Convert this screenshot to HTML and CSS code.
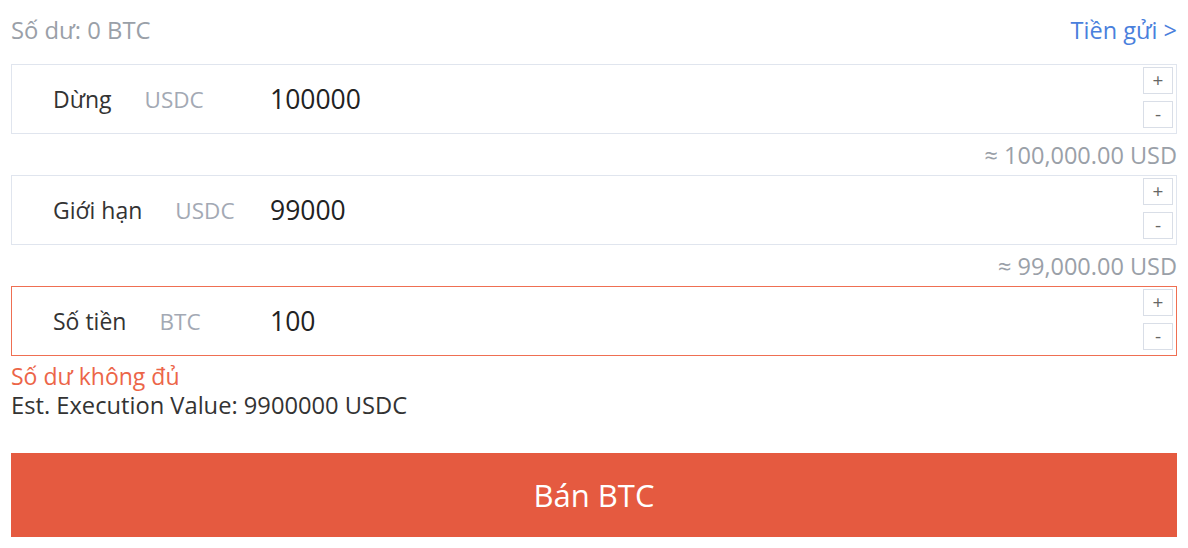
FILE: index.html
```html
<!DOCTYPE html>
<html lang="vi">
<head>
<meta charset="utf-8">
<title>Bán BTC</title>
<link rel="stylesheet" href="styles.css">
</head>
<body>
<div class="panel">
  <div class="top-row">
    <span class="balance">Số dư: 0 BTC</span>
    <a class="deposit" href="#">Tiền gửi &gt;</a>
  </div>

  <div class="field">
    <div class="field-main">
      <span class="label">Dừng</span>
      <span class="unit">USDC</span>
    </div>
    <span class="value">100000</span>
    <div class="steppers">
      <span class="step">+</span>
      <span class="step">-</span>
    </div>
  </div>
  <div class="hint">≈ 100,000.00 USD</div>

  <div class="field">
    <div class="field-main">
      <span class="label">Giới hạn</span>
      <span class="unit">USDC</span>
    </div>
    <span class="value">99000</span>
    <div class="steppers">
      <span class="step">+</span>
      <span class="step">-</span>
    </div>
  </div>
  <div class="hint">≈ 99,000.00 USD</div>

  <div class="field field-error">
    <div class="field-main">
      <span class="label">Số tiền</span>
      <span class="unit">BTC</span>
    </div>
    <span class="value">100</span>
    <div class="steppers">
      <span class="step">+</span>
      <span class="step">-</span>
    </div>
  </div>
  <div class="error">Số dư không đủ</div>
  <div class="est">Est. Execution Value: 9900000 USDC</div>

  <button class="sell">Bán BTC</button>
</div>
</body>
</html>
```

FILE: styles.css
```css
* { box-sizing: border-box; }
html, body { margin: 0; padding: 0; background: #fff; }
body {
  font-family: "Open Sans", "Noto Sans", "DejaVu Sans", sans-serif;
  color: #333;
}
.panel {
  padding: 0 11px;
  display: flex;
  flex-direction: column;
}
.top-row {
  height: 64px;
  display: flex;
  justify-content: space-between;
  align-items: center;
  padding-bottom: 4px;
}
.balance { font-size: 23.8px; color: #9aa0a8; }
.deposit { font-size: 23.5px; color: #4a80dc; text-decoration: none; }

.field {
  height: 70px;
  border: 1px solid #e0e5ee;
  display: flex;
  align-items: center;
  padding: 0 3px 0 41px;
}
.field-error { border-color: #ef6f52; }
.field-main {
  width: 217px;
  display: flex;
  align-items: center;
  gap: 33px;
}
.label { font-size: 23px; color: #333; }
.unit { font-size: 22.5px; color: #a3a9b4; }
.value { font-size: 26.5px; color: #222; flex: 1; }
.steppers {
  display: flex;
  flex-direction: column;
  gap: 7px;
  align-self: flex-start;
  padding-top: 2px;
}
.step {
  width: 30px;
  height: 27px;
  border: 1px solid #d9dee7;
  display: flex;
  align-items: center;
  justify-content: center;
  font-size: 19px;
  color: #666;
  line-height: 1;
}
.hint {
  height: 41px;
  display: flex;
  align-items: center;
  justify-content: flex-end;
  font-size: 23.5px;
  color: #9aa0a8;
}
.error {
  margin-top: 6px;
  font-size: 23px;
  color: #ec6548;
  line-height: 28px;
}
.est {
  font-size: 23.7px;
  color: #333;
  line-height: 30px;
}
.sell {
  margin-top: 33px;
  height: 84px;
  border: none;
  background: #e55a40;
  color: #fff;
  font-family: inherit;
  font-size: 31px;
  width: 100%;
}
```
